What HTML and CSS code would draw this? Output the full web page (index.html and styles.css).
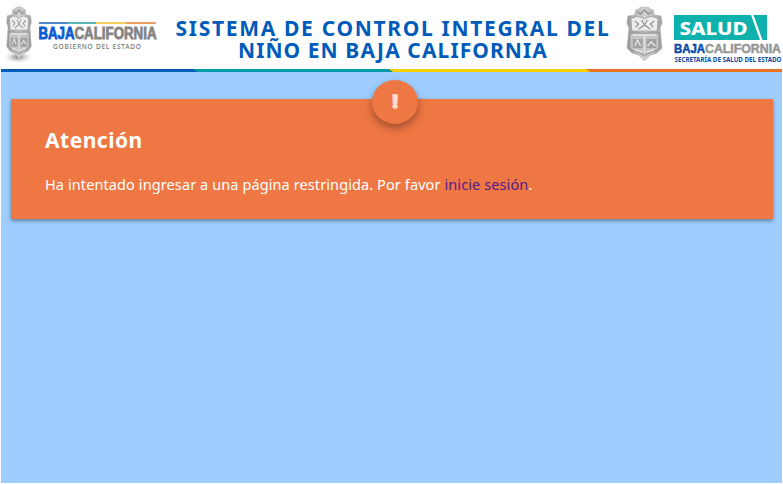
FILE: index.html
```
<!DOCTYPE html>
<html lang="es">
<head>
<meta charset="utf-8">
<title>Sistema de Control Integral del Niño</title>
<link rel="stylesheet" href="styles.css">
</head>
<body>
<svg width="0" height="0" class="defs">
  <defs>
    <linearGradient id="stone" x1="0" x2="1"><stop offset="0" stop-color="#9a9a9a"/><stop offset=".5" stop-color="#d2d2d2"/><stop offset="1" stop-color="#a2a2a2"/></linearGradient>
    <radialGradient id="ground"><stop offset="0" stop-color="#777"/><stop offset="1" stop-color="#fff" stop-opacity="0"/></radialGradient>
    <symbol id="crest" viewBox="0 0 38 55" preserveAspectRatio="none">
      <path d="M9 9 L10 4 13 3 15 1 18 2 19 0 20 2 23 1 25 3 28 4 29 9 36 10 37 17 35 22 36 33 37 42 32 47 25 49 19 55 13 49 6 47 1 42 2 33 3 22 1 17 2 10Z" fill="url(#stone)" stroke="#a8a8a8" stroke-width=".6"/>
      <path d="M4 27 H34 V41 Q33 45 25 46 L19 50 13 46 Q5 45 4 41Z" fill="#c4c4c4" stroke="#8e8e8e"/>
      <path d="M5 13 Q12 8 19 13 Q26 8 33 13 L32 25H6Z" fill="#ececec" stroke="#999" stroke-width=".8"/>
      <path d="M9 15l4 3-3 3M29 15l-4 3 3 3M16 14l3 5 3-5M13 23l6-4 6 4M12 6l3 2 4-4 4 4 3-2" fill="none" stroke="#8c8c8c" stroke-width="1.1"/>
      <path d="M7 33h10v9H7zM21 33h10v9H21z" fill="#a2a2a2"/>
      <path d="M9 40l3-6 3 6M22 40l4-4 4 4M19 29v18M7 29h24M9 44l8 2M29 44l-8 2" fill="none" stroke="#e8e8e8" stroke-width="1.3"/>
    </symbol>
  </defs>
</svg>
<div class="page">
  <header class="header">
    <svg class="logo-left" width="168" height="69" viewBox="0 0 168 69">
      <ellipse cx="18" cy="57" rx="16" ry="7" fill="url(#ground)"/>
      <use href="#crest" x="6" y="6" width="26" height="53"/>
      <path d="M39 23h29" stroke="#1560bd" stroke-width="1.5"/><path d="M68 23h28" stroke="#20a0a0" stroke-width="1.5"/><path d="M96 23h30" stroke="#f2c230" stroke-width="1.5"/><path d="M126 23h30" stroke="#e08030" stroke-width="1.5"/>
      <text class="brand" x="38.5" y="39" textLength="36" lengthAdjust="spacingAndGlyphs" fill="#0a5bd0" stroke="#0a5bd0">BAJA</text>
      <text class="brand" x="74.5" y="39" textLength="82" lengthAdjust="spacingAndGlyphs" fill="#858585" stroke="#858585">CALIFORNIA</text>
      <text class="brand-sub" x="53" y="48.5" textLength="88">GOBIERNO DEL ESTADO</text>
    </svg>
    <h1 class="title"><span class="line wide">SISTEMA DE CONTROL INTEGRAL DEL</span><span class="line">NIÑO EN BAJA CALIFORNIA</span></h1>
    <svg class="logo-right" width="160" height="69" viewBox="622 0 160 69">
      <use href="#crest" x="626" y="6" width="37" height="55"/>
      <path d="M674 15H751L760 40H674Z" fill="#0eb1ac"/><path d="M753.500 15H767V40H762.500Z" fill="#0eb1ac"/>
      <text class="salud" x="679.500" y="34.500" textLength="68" lengthAdjust="spacingAndGlyphs">SALUD</text>
      <text class="brand small" x="674" y="52.500" textLength="31" lengthAdjust="spacingAndGlyphs" fill="#0a4ba8" stroke="#0a4ba8">BAJA</text>
      <text class="brand small" x="705" y="52.500" textLength="76" lengthAdjust="spacingAndGlyphs" fill="#969696" stroke="#969696">CALIFORNIA</text>
      <text class="dept" x="674.500" y="61.500" textLength="107" lengthAdjust="spacingAndGlyphs">SECRETARÍA DE SALUD DEL ESTADO</text>
    </svg>
  </header>
  <svg class="stripe" width="781" height="3" viewBox="0 0 781 3">
    <path d="M0 0H781V3H0Z" fill="#e87424"/><path d="M0 0H585L589 3H0Z" fill="#fcd000"/><path d="M0 0H388L392 3H0Z" fill="#009ba4"/><path d="M0 0H192L196 3H0Z" fill="#005bbb"/>
  </svg>
  <main class="content">
    <section class="card">
      <div class="badge">!</div>
      <h2 class="card-title">Atención</h2>
      <p class="card-text">Ha intentado ingresar a una página restringida. Por favor <a href="#">inicie sesión</a>.</p>
    </section>
  </main>
</div>
</body>
</html>
```
FILE: styles.css
```
body { margin: 0; background: #fff; font-family: "Noto Sans", sans-serif; overflow: hidden; }
.defs { display: block; }
.page { box-sizing: border-box; width: 781px; height: 483px; margin-left: 1px; background: #9eceff; }
.header { display: flex; justify-content: space-between; height: 69px; background: #fff; }
.logo-left { margin-left: -1px; flex: none; }
.logo-right { flex: none; }
.title { margin: 18px 0 0; flex: 1; min-width: 0; padding-right: 4px; text-align: center; white-space: nowrap; font-size: 21px; line-height: 21.5px; font-weight: 700; letter-spacing: 1.1px; color: #005bbb; }
.line { display: block; }
.wide { letter-spacing: 1.68px; }
.stripe { display: block; }
.content { padding: 27px 9px 0 10px; }
.card { position: relative; box-sizing: border-box; height: 120px; padding: 27px 34px; background: #ef7743; color: #fff; box-shadow: 0 2px 4px rgba(0,0,0,.4); }
.badge { position: absolute; left: 361px; top: -19px; width: 46px; height: 44px; border-radius: 50%; background: #ef7743; color: #ffdccd; font: 900 18px/43px "Noto Sans", sans-serif; -webkit-text-stroke: 1.6px #ffdccd; text-align: center; box-shadow: 0 4px 8px rgba(0,0,0,.35); }
.card-title { margin: 0; font-size: 21px; line-height: 29px; font-weight: 700; letter-spacing: .5px; }
.card-text { margin: 19px 0 0; font-size: 14.5px; line-height: 20px; letter-spacing: .1px; white-space: nowrap; }
.card-text a { color: #551a8b; text-decoration: none; }
.brand { font: 700 15.6px "Liberation Sans", sans-serif; stroke-width: .8px; }
.brand.small { font-size: 12px; stroke-width: .5px; }
.brand-sub { font: 500 6.6px "Noto Sans", sans-serif; fill: #777; }
.salud { font: 800 17.5px "Noto Sans", sans-serif; fill: #fff; }
.dept { font: 700 6.4px "Noto Sans", sans-serif; fill: #0a4ba8; }
```
